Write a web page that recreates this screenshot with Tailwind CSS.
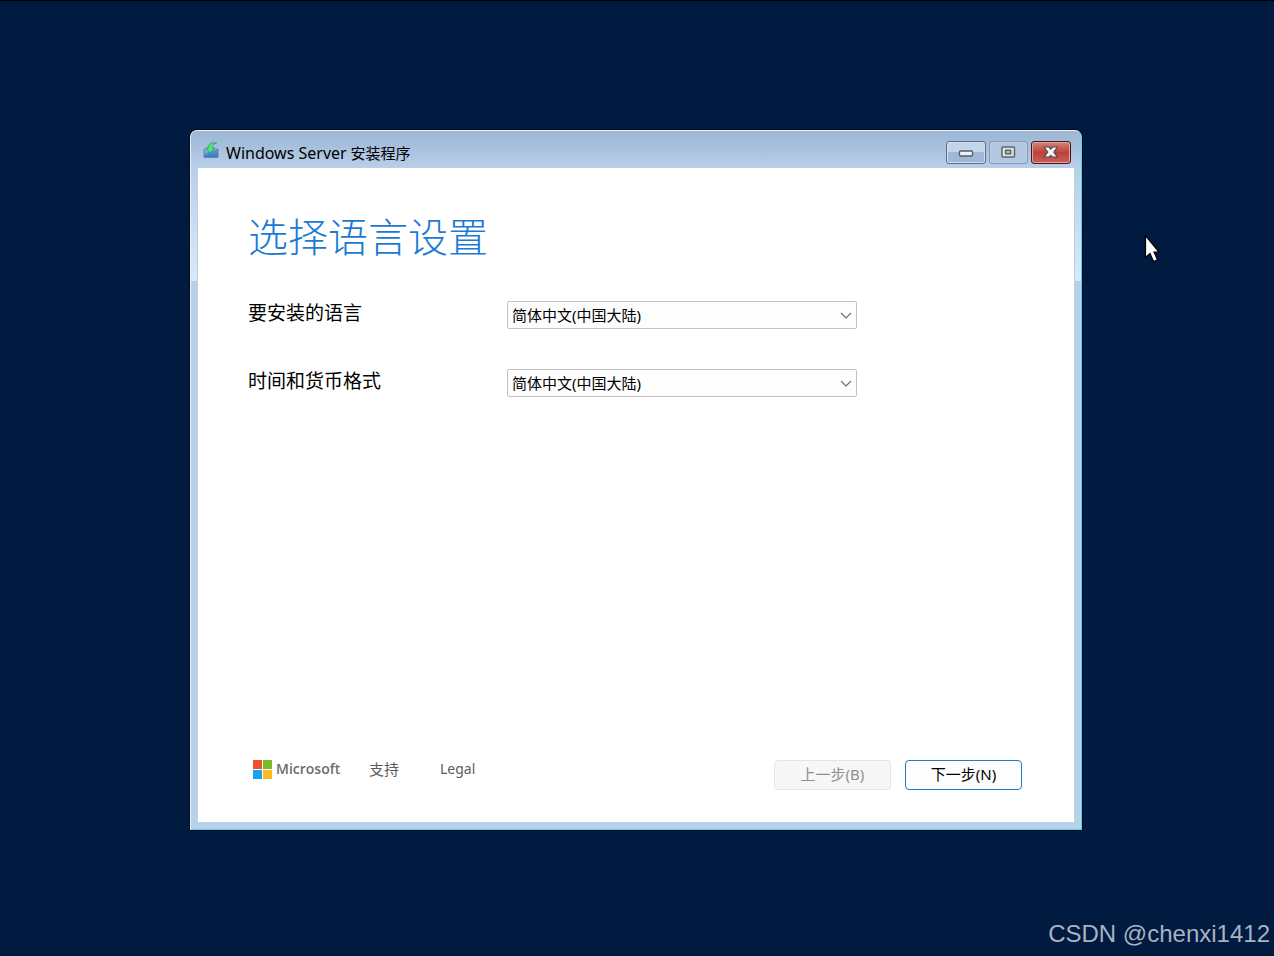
<!DOCTYPE html>
<html lang="zh-CN">
<head>
<meta charset="utf-8">
<meta name="viewport" content="width=device-width, initial-scale=1">
<title>Windows Server 安装程序</title>
<script src="https://cdn.jsdelivr.net/npm/@tailwindcss/browser@4"></script>
</head>
<body class="relative flex min-h-screen border-t border-black bg-[#001a40] px-[190px] pt-[129px] pb-[126px] font-['Noto_Sans','Noto_Sans_CJK_SC',sans-serif] text-black">

<main class="relative mr-[2px] flex flex-1 flex-col rounded-t-[7px] border border-t-[#e9f2fb] border-r-[#4fd8f0] border-b-[#4fd8e8] border-l-[#e9f2fb] bg-[#bad0e9] px-[7px] pb-[7px] shadow-[0_0_0_1px_#000c1c]">
  <div class="absolute top-[37px] left-0 h-[113px] w-[6px] bg-linear-to-b from-[#b9cfe8] to-[#dbe9f7]"></div>
  <div class="absolute top-[37px] right-0 h-[113px] w-[6px] bg-linear-to-b from-[#b9cfe8] to-[#dbe9f7]"></div>

  <header class="-mx-[7px] flex h-[37px] items-center rounded-t-[6px] bg-linear-to-b from-[#9bb5d3] to-[#b9cfe9] pt-[6px] pr-[10px] pl-[12px]">
    <svg class="mb-[5px] h-[17px] w-[16px]" viewBox="0 0 16 17" aria-hidden="true">
      <defs><linearGradient id="box" x1="0" y1="0" x2="0" y2="1"><stop offset="0" stop-color="#8fbde6"/><stop offset="1" stop-color="#3a7cc6"/></linearGradient></defs>
      <path d="M1 7h14v8.500H1z" fill="url(#box)" stroke="#6a86a6"/>
      <path d="M1 15L7 10l8-3v8z" fill="#2f74c0" opacity=".5"/>
      <path d="M13.500 1C8.500.2 5 2.200 5 6H2.800L7 11l4.700-5H9.300c-.3-2 1-3.600 4.200-5z" fill="#55e27c" stroke="#2b9b58" stroke-width=".8"/>
    </svg>
    <h1 class="ml-[7px] flex-1 text-[15px] leading-5 whitespace-nowrap"><span class="text-base leading-5">Windows Server</span> 安装程序</h1>
    <div class="flex gap-[3px]">
      <button type="button" aria-label="最小化" class="flex h-[23px] w-[40px] items-center justify-center rounded-[3px] border border-[#586e8e] bg-linear-to-b from-[#c3d5e9] from-50% to-[#9fb8d5] to-50% shadow-[inset_0_0_0_1px_#d1dfef]">
        <svg class="h-[15px] w-[16px]" viewBox="0 0 16 15"><rect x="1.500" y="6" width="13" height="5" rx="1" fill="#f1f1f1" stroke="#555c67" stroke-width="1.300"/></svg>
      </button>
      <button type="button" aria-label="最大化" disabled class="flex h-[23px] w-[39px] items-center justify-center rounded-[3px] border border-[#8198b7] bg-[#b2c8e1] shadow-[inset_0_0_0_1px_#bfd1e6]">
        <svg class="h-[13px] w-[15px]" viewBox="0 0 15 13"><rect x="1" y="1" width="12.500" height="10" rx="1" fill="#e2e4e7" stroke="#5d646e" stroke-width="1.500"/><rect x="4.700" y="4.300" width="5" height="3.500" fill="#a9bfda" stroke="#5d646e" stroke-width="1.500"/></svg>
      </button>
      <button type="button" aria-label="关闭" class="flex h-[23px] w-[40px] items-center justify-center rounded-[3px] border border-[#4b1420] bg-linear-to-b from-[#d5837b] via-[#bb4136] via-50% to-[#c86156] shadow-[inset_0_0_0_1px_#e0a49f]">
        <svg class="h-[13px] w-[16px]" viewBox="0 0 16 13"><path d="M1 1h5l1.700 2L9.500 1h5L10.800 6.200l3.700 5h-5L7.700 9.300 6 11.200H1L4.700 6.200z" fill="#f4f4f4" stroke="#5a4950" stroke-width="1.200" stroke-linejoin="round"/></svg>
      </button>
    </div>
  </header>

  <section class="relative flex flex-1 flex-col bg-white pr-[52px] pb-[32px] pl-[50px]">
    <h2 class="mt-[39px] text-[40px] leading-[60px] font-light text-[#1a7ad4]">选择语言设置</h2>

    <form class="mt-[34px] flex flex-col gap-10">
      <div class="flex h-7 items-center">
        <label for="language" class="w-[259px] text-[19px] leading-6 pb-1">要安装的语言</label>
        <div class="relative w-[350px]">
          <select id="language" class="block h-7 w-full appearance-none rounded-[2px] border border-[#c3c3c3] bg-[#fdfdfd] pl-[4px] text-[15px] leading-6"><option>简体中文(中国大陆)</option></select>
          <svg class="pointer-events-none absolute top-[11px] right-[5px] h-[8px] w-[12px]" viewBox="0 0 12 8" fill="none" stroke="#707070" stroke-width="1.200"><path d="M1 1l5 5 5-5"/></svg>
        </div>
      </div>
      <div class="flex h-7 items-center">
        <label for="format" class="w-[259px] text-[19px] leading-6 pb-1">时间和货币格式</label>
        <div class="relative w-[350px]">
          <select id="format" class="block h-7 w-full appearance-none rounded-[2px] border border-[#c3c3c3] bg-[#fdfdfd] pl-[4px] text-[15px] leading-6"><option>简体中文(中国大陆)</option></select>
          <svg class="pointer-events-none absolute top-[11px] right-[5px] h-[8px] w-[12px]" viewBox="0 0 12 8" fill="none" stroke="#707070" stroke-width="1.200"><path d="M1 1l5 5 5-5"/></svg>
        </div>
      </div>
    </form>

    <footer class="mt-auto flex items-center justify-between">
      <div class="flex items-center pb-[11px] pl-[5px] text-[15px] leading-5 text-[#5c5c5c]">
        <svg class="h-[19px] w-[19px]" viewBox="0 0 19 19" aria-hidden="true"><path fill="#f0502a" d="M0 0h9v9H0z"/><path fill="#7db922" d="M10 0h9v9h-9z"/><path fill="#16a2ee" d="M0 10h9v9H0z"/><path fill="#fdb921" d="M10 10h9v9h-9z"/></svg>
        <span class="ml-1 w-[62px] font-['Open_Sans',sans-serif] text-[14px] font-semibold text-[#6c6c6c]">Microsoft</span>
        <a href="#" class="ml-[31px]">支持</a>
        <a href="#" class="ml-[41px] text-[14px]">Legal</a>
      </div>
      <div class="flex gap-[14px] text-[15px] leading-5">
        <button type="button" disabled class="h-[30px] w-[117px] rounded-[4px] border border-[#e6e6e6] bg-[#f7f7f7] pb-[2px] text-[#8f8f8f]">上一步(B)</button>
        <button type="button" class="h-[30px] w-[117px] rounded-[4px] border border-[#1f7cc0] bg-[#fdfdfd] pb-[2px]">下一步(N)</button>
      </div>
    </footer>
  </section>
</main>

<svg class="absolute top-[233px] left-[1144px] h-[30px] w-[18px]" viewBox="0 0 18 30" aria-hidden="true"><path d="M1.500 1.500v22l4.500-4 3.500 8 4-1.700-3.500-7.800h5z" fill="#fff" stroke="#000" stroke-width="1.200"/></svg>
<p class="absolute right-[4px] bottom-[6px] font-['Liberation_Sans',sans-serif] text-[24px] leading-8 text-[#a9b2c0]">CSDN @chenxi1412</p>
</body>
</html>
